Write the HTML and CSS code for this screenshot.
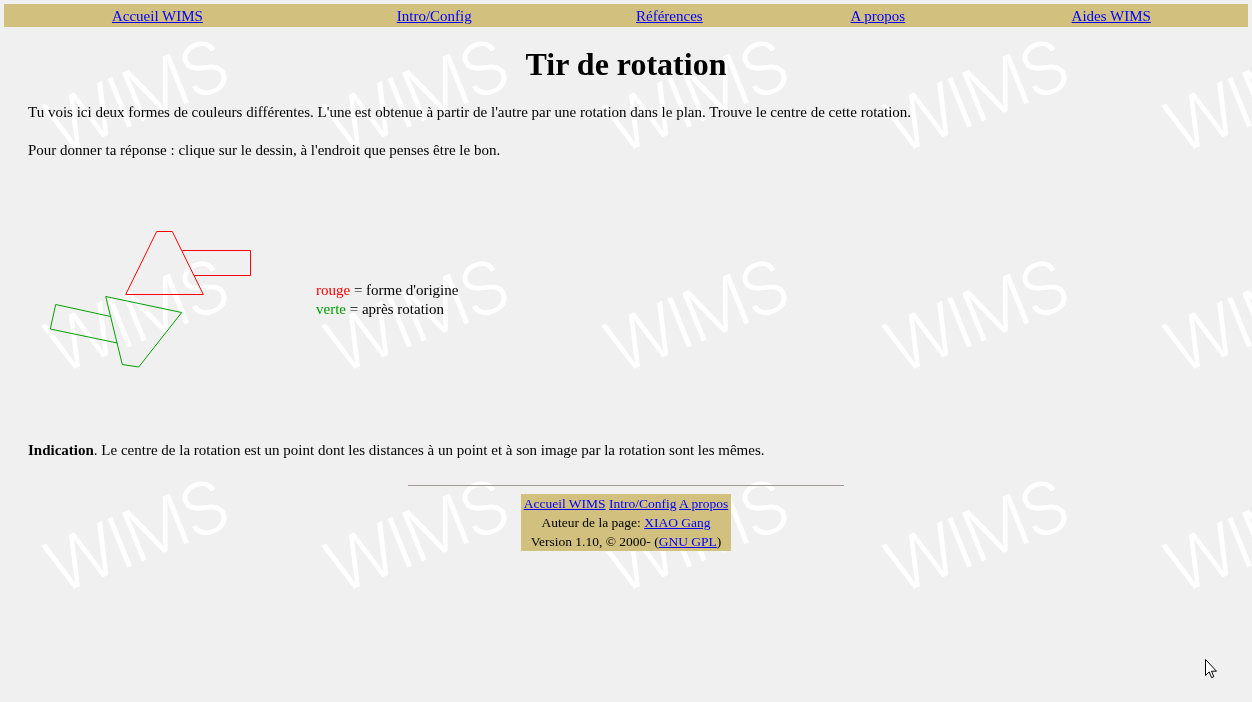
FILE: index.html
```html
<!DOCTYPE html>
<html lang="fr">
<head>
<meta charset="utf-8">
<title>Tir de rotation</title>
<link rel="stylesheet" href="styles.css">
</head>
<body>
<div class="watermark" aria-hidden="true">
  <div class="wm-cell"><span class="wm-text">WIMS</span></div>
  <div class="wm-cell"><span class="wm-text">WIMS</span></div>
  <div class="wm-cell"><span class="wm-text">WIMS</span></div>
  <div class="wm-cell"><span class="wm-text">WIMS</span></div>
  <div class="wm-cell"><span class="wm-text">WIMS</span></div>
  <div class="wm-cell"><span class="wm-text">WIMS</span></div>
  <div class="wm-cell"><span class="wm-text">WIMS</span></div>
  <div class="wm-cell"><span class="wm-text">WIMS</span></div>
  <div class="wm-cell"><span class="wm-text">WIMS</span></div>
  <div class="wm-cell"><span class="wm-text">WIMS</span></div>
  <div class="wm-cell"><span class="wm-text">WIMS</span></div>
  <div class="wm-cell"><span class="wm-text">WIMS</span></div>
  <div class="wm-cell"><span class="wm-text">WIMS</span></div>
  <div class="wm-cell"><span class="wm-text">WIMS</span></div>
  <div class="wm-cell"><span class="wm-text">WIMS</span></div>
</div>

<nav class="topbar">
  <div class="topbar-cell"><a href="#">Accueil WIMS</a></div>
  <div class="topbar-cell"><a href="#">Intro/Config</a></div>
  <div class="topbar-cell"><a href="#">Références</a></div>
  <div class="topbar-cell"><a href="#">A propos</a></div>
  <div class="topbar-cell"><a href="#">Aides WIMS</a></div>
</nav>

<main class="content">
  <h1 class="title">Tir de rotation</h1>
  <p class="para">Tu vois ici deux formes de couleurs différentes. L'une est obtenue à partir de l'autre par une rotation dans le plan. Trouve le centre de cette rotation.</p>
  <p class="para">Pour donner ta réponse : clique sur le dessin, à l'endroit que penses être le bon.</p>

  <div class="figure">
    <svg class="drawing" width="280" height="242" viewBox="28 179 280 242" xmlns="http://www.w3.org/2000/svg">
      <polygon points="156.7,231.5 172.3,231.5 203.3,294.5 125.7,294.5" fill="none" stroke="#ff0000" stroke-width="1"/>
      <polyline points="182.3,250.5 250.5,250.5 250.5,275.5 194,275.5" fill="none" stroke="#ff0000" stroke-width="1"/>
      <polygon points="105.7,296.5 181.7,312.5 138.7,367 122.3,364.5" fill="none" stroke="#00a000" stroke-width="1"/>
      <polyline points="110.7,316.5 55.7,304.5 50.3,329 117.3,343" fill="none" stroke="#00a000" stroke-width="1"/>
    </svg>
    <div class="legend">
      <div><span class="red">rouge</span> = forme d'origine</div>
      <div><span class="green">verte</span> = après rotation</div>
    </div>
  </div>

  <p class="para hint"><b>Indication</b>. Le centre de la rotation est un point dont les distances à un point et à son image par la rotation sont les mêmes.</p>
</main>

<hr class="rule">

<div class="footer">
  <div class="footer-row"><a href="#">Accueil WIMS</a> <a href="#">Intro/Config</a> <a href="#">A propos</a></div>
  <div class="footer-row">Auteur de la page: <a href="#">XIAO Gang</a></div>
  <div class="footer-row">Version 1.10, © 2000- (<a href="#">GNU GPL</a>)</div>
</div>

<svg class="cursor" width="13" height="21" viewBox="0 0 13 21" xmlns="http://www.w3.org/2000/svg">
  <path d="M0.5 0.5 L0.5 16.5 L4.2 12.9 L6.6 18.6 L8.8 17.7 L6.5 12.2 L11.5 12.2 Z" fill="#ffffff" stroke="#000000" stroke-width="1" stroke-linejoin="miter"/>
</svg>
</body>
</html>
```

FILE: styles.css
```css
html {
  background: #f0f0f0;
}

body {
  margin: 4px;
  font-family: "Liberation Serif", "Times New Roman", serif;
  font-size: 15px;
  color: #000000;
  position: relative;
  min-height: 690px;
}

a {
  color: #0000ff;
  text-decoration: underline;
}

/* watermark background */
.watermark {
  position: fixed;
  top: 0;
  left: 0;
  width: 1252px;
  height: 702px;
  overflow: hidden;
  z-index: -1;
  display: grid;
  grid-template-columns: repeat(5, 280px);
  grid-auto-rows: 220px;
}

.wm-cell {
  padding: 93px 0 0 59px;
  box-sizing: border-box;
}

.wm-text {
  display: block;
  width: 200px;
  font-family: Inter, "DejaVu Sans", sans-serif;
  font-weight: 300;
  font-size: 72px;
  line-height: 72px;
  letter-spacing: -3px;
  color: #ffffff;
  transform-origin: 0 62px;
  transform: rotate(-22deg);
  white-space: nowrap;
}

/* top navigation bar */
.topbar {
  display: grid;
  grid-template-columns: 92fr 74fr 67fr 58fr 82fr;
  background: #d1c07e;
  padding: 3px 0 1px;
  line-height: 19px;
}

.topbar-cell {
  text-align: center;
}

/* main content */
.content {
  padding: 0 24px;
}

.title {
  text-align: center;
  font-size: 32px;
  font-weight: bold;
  margin: 19px 0 20px;
  line-height: 37px;
}

.para {
  margin: 20px 0;
  line-height: 18px;
}

.figure {
  display: flex;
  align-items: center;
  margin: 20px 0;
}

.drawing {
  display: block;
  flex: none;
}

.legend {
  margin-left: 8px;
  line-height: 19px;
}

.red {
  color: #ff0000;
}

.green {
  color: #00a000;
}

.hint {
  margin-bottom: 26px;
}

.rule {
  width: 35%;
  margin: 8px auto;
  border: 0;
  border-top: 1px solid #a09a94;
  height: 0;
}

.footer {
  width: fit-content;
  margin: 0 auto;
  background: #d1c07e;
  padding: 0 3px;
  font-size: 13.5px;
  line-height: 19px;
  text-align: center;
}

.cursor {
  position: absolute;
  left: 1201px;
  top: 655px;
}
```
